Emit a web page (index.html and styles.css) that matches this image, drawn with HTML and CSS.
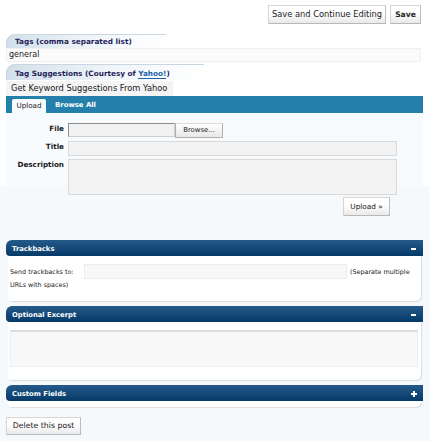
FILE: index.html
```html
<!DOCTYPE html>
<html>
<head>
<meta charset="utf-8">
<link rel="stylesheet" href="styles.css">
</head>
<body>
<div class="top">
  <div class="actions">
    <button class="btn save-cont">Save and Continue Editing</button>
    <button class="btn save">Save</button>
  </div>
  <div class="field first">
    <div class="legend">Tags (comma separated list)</div>
    <div class="textbox">general</div>
  </div>
  <div class="field">
    <div class="legend">Tag Suggestions (Courtesy of <a class="yahoo">Yahoo!</a>)</div>
    <div class="suggest">Get Keyword Suggestions From Yahoo</div>
  </div>
  <div class="uploader">
    <div class="tabs">
      <span class="tab active">Upload</span>
      <span class="tab">Browse All</span>
    </div>
    <div class="upanel">
      <div class="row">
        <label class="lbl">File</label>
        <div class="filebox"></div>
        <button class="browse">Browse...</button>
      </div>
      <div class="row">
        <label class="lbl">Title</label>
        <div class="inp title"></div>
      </div>
      <div class="row">
        <label class="lbl">Description</label>
        <div class="inp desc"></div>
      </div>
    </div>
  </div>
</div>
<div class="uprow"><button class="btn upbtn">Upload »</button></div>

<div class="box tbbox">
  <div class="boxhead"><span>Trackbacks</span><span class="tog minus"></span></div>
  <div class="boxbody tb">
    <div class="tbline"><span>Send trackbacks to:</span><div class="tbinp"></div><span>(Separate multiple</span></div>
    <div class="tbline2">URLs with spaces)</div>
  </div>
</div>
<div class="box">
  <div class="boxhead"><span>Optional Excerpt</span><span class="tog minus"></span></div>
  <div class="boxbody ex">
    <div class="excerpt"></div>
  </div>
</div>
<div class="box">
  <div class="boxhead"><span>Custom Fields</span><span class="tog plus"></span></div>
  <div class="boxbody cf"></div>
</div>
<div class="delrow"><button class="btn delbtn">Delete this post</button></div>
</body>
</html>
```
FILE: styles.css
```css
html, body {
  margin: 0;
  padding: 0;
}
body {
  background: #f5f9fc;
  font-family: "DejaVu Sans", Verdana, sans-serif;
  font-size: 8px;
  color: #222;
  width: 430px;
  height: 441px;
  overflow: hidden;
}
.top {
  background: #fff;
  padding: 5px 0 0 6px;
  height: 186px;
  box-sizing: border-box;
}
.actions {
  display: flex;
  justify-content: flex-end;
  gap: 4px;
  padding-right: 9px;
  height: 19px;
}
.btn {
  font-family: "DejaVu Sans", Verdana, sans-serif;
  font-size: 8.3px;
  color: #222;
  height: 19px;
  padding: 0 4px;
  border: 1px solid #d6d6d6;
  border-bottom-color: #b8b8b8;
  border-right-color: #bcbcbc;
  background: linear-gradient(#ffffff 40%, #e9e9e9);
  line-height: 17px;
  margin: 0;
  box-sizing: border-box;
  white-space: nowrap;
}
.save-cont { width: 118px; padding: 0; }
.save { width: 31px; padding: 0; font-weight: bold; font-size: 7.6px; }
.field {
  display: flex;
  flex-direction: column;
  align-items: flex-start;
  margin-top: 2px;
}
.field.first { margin-top: 10px; }
.legend {
  height: 14px;
  line-height: 15px;
  padding: 0 34px 0 9px;
  border-top-left-radius: 9px;
  background: linear-gradient(90deg, #d3e0ea, #f3f7fa 60%, #ffffff);
  box-shadow: inset 1px 1px 0 #c8d6e2;
  font-weight: bold;
  color: #1f1f5c;
  font-size: 7.3px;
  box-sizing: border-box;
}
.field + .field .legend { height: 16px; line-height: 19px; }
.yahoo {
  color: #2161a8;
  border-bottom: 1px solid #2161a8;
}
.textbox {
  width: 415px;
  height: 14px;
  box-sizing: border-box;
  border: 1px solid #f0f0f0;
  background: #fbfbfb;
  font-size: 8px;
  line-height: 12px;
  padding-left: 2px;
}
.suggest {
  background: #f4f4f4;
  height: 15px;
  line-height: 15px;
  width: 167px;
  box-sizing: border-box;
  padding-left: 5px;
  font-size: 8.3px;
  color: #1a1a1a;
  margin-top: 1px;
}
.uploader {
  width: 417px;
}
.tabs {
  background: #2480ab;
  height: 17px;
  display: flex;
  align-items: flex-end;
  padding-left: 6px;
  gap: 9px;
}
.tab {
  color: #fff;
  font-weight: bold;
  font-size: 6.9px;
  line-height: 15px;
}
.tab.active {
  background: #f8fbfd;
  color: #222;
  font-weight: normal;
  font-size: 7.2px;
  width: 34px;
  height: 14px;
  text-align: center;
  line-height: 14px;
  border-top-left-radius: 2px;
  border-top-right-radius: 2px;
}
.upanel {
  background: #f8fbfd;
  padding-top: 10px;
  height: 73px;
  box-sizing: border-box;
}
.row {
  display: flex;
  align-items: flex-start;
  margin-bottom: 3px;
}
.lbl {
  width: 58px;
  text-align: right;
  font-weight: bold;
  font-size: 7.2px;
  padding-right: 4px;
  line-height: 11px;
  color: #1a1a1a;
}
.filebox {
  width: 107px;
  height: 14px;
  box-sizing: border-box;
  border: 1px solid #8d8d8d;
  border-bottom-color: #cfcfcf;
  border-right-color: #cfcfcf;
  background: #f2f2f2;
}
.browse {
  font-family: "DejaVu Sans", Verdana, sans-serif;
  font-size: 6.9px;
  height: 15px;
  width: 48px;
  padding: 0;
  margin: 0;
  border: 1px solid #b0b0b0;
  border-top-color: #ddd;
  background: linear-gradient(#fff, #e8e8e8);
  line-height: 13px;
  color: #222;
  box-sizing: border-box;
}
.inp {
  border: 1px solid #d9d9d9;
  background: #f3f3f3;
  box-sizing: border-box;
}
.title { width: 329px; height: 15px; }
.desc { width: 329px; height: 36px; }
.uprow {
  display: flex;
  justify-content: flex-end;
  padding: 11px 40px 0 0;
}
.upbtn { height: 19px; width: 47px; font-size: 7.3px; padding: 0; }
.box {
  margin: 0 7px 5px 6px;
}
.tbbox { margin-top: 24px; }
.boxhead {
  height: 16px;
  background: linear-gradient(#24598a, #053a68);
  border-top-left-radius: 6px;
  border-bottom-left-radius: 4px;
  color: #fff;
  font-weight: bold;
  font-size: 6.8px;
  display: flex;
  justify-content: space-between;
  align-items: center;
  padding: 1px 7px 0 6px;
  box-sizing: border-box;
}
.tog {
  position: relative;
  width: 5px;
  height: 5px;
}
.tog::before {
  content: "";
  position: absolute;
  left: 0;
  top: 2px;
  width: 5px;
  height: 2px;
  background: #fff;
}
.tog.plus::after {
  content: "";
  position: absolute;
  left: 2px;
  top: 0;
  width: 2px;
  height: 6px;
  background: #fff;
}
.tog.plus::before { width: 6px; left: 0; }
.boxbody {
  background: #fff;
  margin: 0 2px 0 2px;
  border-bottom-right-radius: 5px;
  border-bottom-left-radius: 3px;
  box-shadow: 1px 1px 1px #dcdcdc;
}
.tb {
  height: 45px;
  padding: 0 2px;
  box-sizing: border-box;
  font-size: 6.4px;
  color: #222;
}
.tbline {
  display: flex;
  align-items: center;
  padding-top: 8px;
}
.tbline > span:first-child { width: 74px; }
.tbinp {
  width: 263px;
  height: 15px;
  background: #f8f8f8;
  border: 1px solid #ececec;
  box-sizing: border-box;
  margin-right: 3px;
}
.tbline2 { margin-top: 2px; }
.ex {
  height: 58px;
  padding: 8px 3px 0 2px;
  box-sizing: border-box;
}
.excerpt {
  height: 37px;
  background: #f8f8f8;
  border: 1px solid #eee;
  border-top: 2px solid #dcdcdc;
  box-sizing: border-box;
}
.cf { height: 6px; }
.delrow { padding: 5px 0 0 6px; }
.delbtn { width: 75px; height: 18px; font-size: 7.8px; padding: 0; line-height: 16px; }
```
